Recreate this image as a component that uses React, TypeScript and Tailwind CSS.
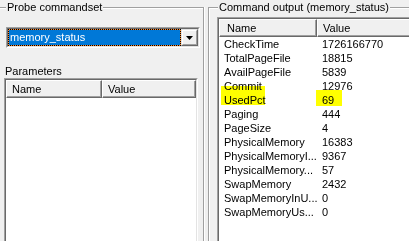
import type { ReactNode } from "react"

const rows: [string, string][] = [
  ["CheckTime", "1726166770"],
  ["TotalPageFile", "18815"],
  ["AvailPageFile", "5839"],
  ["Commit", "12976"],
  ["UsedPct", "69"],
  ["Paging", "444"],
  ["PageSize", "4"],
  ["PhysicalMemory", "16383"],
  ["PhysicalMemoryI...", "9367"],
  ["PhysicalMemory...", "57"],
  ["SwapMemory", "2432"],
  ["SwapMemoryInU...", "0"],
  ["SwapMemoryUs...", "0"],
]

// classic 2px sunken frame
function Sunken({ className, children }: { className: string; children?: ReactNode }) {
  return (
    <div className={"border border-t-[#a0a0a0] border-l-[#a0a0a0] border-r-white border-b-white " + className}>
      <div className="h-full border border-t-[#696969] border-l-[#696969] border-r-[#e3e3e3] border-b-[#e3e3e3] bg-white">
        {children}
      </div>
    </div>
  )
}

function HeaderCell({ label, className }: { label: string; className: string }) {
  return (
    <div
      className={
        "h-[18px] border border-t-white border-l-white border-r-[#696969] border-b-[#696969] bg-[#f0f0f0] shadow-[inset_-1px_-1px_0_#a0a0a0] leading-[16px] " +
        className
      }
    >
      {label}
    </div>
  )
}

export default function App() {
  return (
    <div className="w-[409px] h-[241px] overflow-hidden bg-[#f0f0f0] flex pt-px text-[11px] leading-[13px] text-black font-['Liberation_Sans',Arial,sans-serif]">
      {/* Probe commandset */}
      <fieldset className="w-[204px] h-[300px] shrink-0 border border-l-0 border-b-0 border-[#a0a0a0] shadow-[inset_0_1px_0_#fff,1px_0_0_#fff]">
        <legend className="ml-[6px] px-px bg-[#f0f0f0] leading-[13px]">Probe commandset</legend>

        <Sunken className="ml-[6px] mt-[13px] w-[194px] h-[21px]">
          <div className="flex h-full">
            <div className="flex-1 border border-dotted border-black bg-[#ff8728]">
              <div className="h-full bg-[#0078d7] text-white pl-px leading-[15px]">memory_status</div>
            </div>
            <div className="w-[17px] h-full border border-t-[#e3e3e3] border-l-[#e3e3e3] border-r-[#696969] border-b-[#696969]">
              <div className="h-full flex items-center justify-center border border-t-white border-l-white border-r-[#a0a0a0] border-b-[#a0a0a0] bg-[#f0f0f0]">
                <svg width="7" height="4" viewBox="0 0 7 4">
                  <path d="M0 0h7L3.5 4z" fill="#000" />
                </svg>
              </div>
            </div>
          </div>
        </Sunken>

        <div className="ml-[5px] mt-[17px]">Parameters</div>

        <Sunken className="ml-[4px] w-[194px] h-[200px]">
          <div className="flex">
            <HeaderCell label="Name" className="w-[96px] pl-[5px]" />
            <HeaderCell label="Value" className="flex-1 pl-[5px]" />
          </div>
        </Sunken>
      </fieldset>

      {/* Command output */}
      <fieldset className="ml-[4px] w-[230px] h-[300px] shrink-0 border border-r-0 border-b-0 border-[#a0a0a0] shadow-[inset_1px_1px_0_#fff]">
        <legend className="ml-[9px] px-px bg-[#f0f0f0] leading-[13px]">Command output (memory_status)</legend>

        <Sunken className="ml-[8px] mt-[3px] w-[220px] h-[260px]">
          <div className="relative">
            <div className="flex">
              <HeaderCell label="Name" className="w-[98px] pl-[7px]" />
              <HeaderCell label="Value" className="flex-1 pl-[5px]" />
            </div>
            {rows.map(([name, value]) => (
              <div key={name} className="grid grid-cols-[98px_1fr] h-[14px] leading-[14px]">
                <div className="pl-[5px] whitespace-nowrap">{name}</div>
                <div className="pl-[5px]">{value}</div>
              </div>
            ))}
            {/* marker highlights */}
            <div className="absolute left-[2px] top-[67px] w-[44px] h-[19px] bg-[#ffff00] mix-blend-multiply" />
            <div className="absolute left-[97px] top-[71px] w-[26px] h-[16px] bg-[#ffff00] mix-blend-multiply" />
          </div>
        </Sunken>
      </fieldset>
    </div>
  )
}
